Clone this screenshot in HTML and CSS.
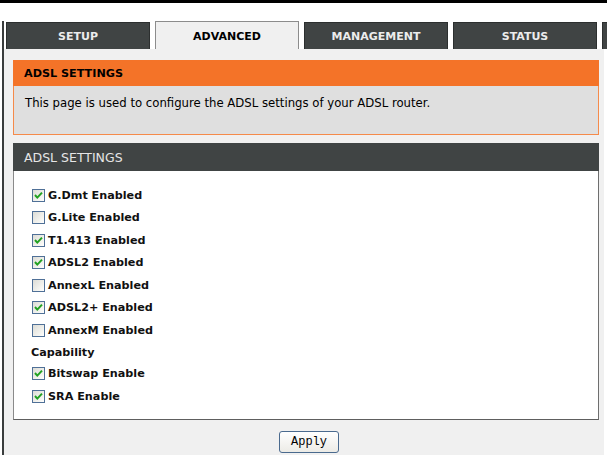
FILE: index.html
```html
<!DOCTYPE html>
<html>
<head>
<meta charset="utf-8">
<link rel="stylesheet" href="styles.css">
</head>
<body>
<div class="topbar"></div>
<div class="page">
  <div class="tabs">
    <div class="tab">SETUP</div>
    <div class="tab active">ADVANCED</div>
    <div class="tab">MANAGEMENT</div>
    <div class="tab">STATUS</div>
    <div class="tab"></div>
  </div>
  <div class="content">
    <section class="box orange">
      <div class="box-head">ADSL SETTINGS</div>
      <div class="box-body">This page is used to configure the ADSL settings of your ADSL router.</div>
    </section>
    <section class="box dark">
      <div class="box-head">ADSL SETTINGS</div>
      <div class="box-body list">
        <div class="row"><span class="cb"><svg viewBox="0 0 13 13" width="13" height="13"><path d="M3 6 L5.3 8.6 L10 3.6" /></svg></span>G.Dmt Enabled</div>
        <div class="row"><span class="cb"></span>G.Lite Enabled</div>
        <div class="row"><span class="cb"><svg viewBox="0 0 13 13" width="13" height="13"><path d="M3 6 L5.3 8.6 L10 3.6" /></svg></span>T1.413 Enabled</div>
        <div class="row"><span class="cb"><svg viewBox="0 0 13 13" width="13" height="13"><path d="M3 6 L5.3 8.6 L10 3.6" /></svg></span>ADSL2 Enabled</div>
        <div class="row"><span class="cb"></span>AnnexL Enabled</div>
        <div class="row"><span class="cb"><svg viewBox="0 0 13 13" width="13" height="13"><path d="M3 6 L5.3 8.6 L10 3.6" /></svg></span>ADSL2+ Enabled</div>
        <div class="row"><span class="cb"></span>AnnexM Enabled</div>
        <div class="row cap">Capability</div>
        <div class="row"><span class="cb"><svg viewBox="0 0 13 13" width="13" height="13"><path d="M3 6 L5.3 8.6 L10 3.6" /></svg></span>Bitswap Enable</div>
        <div class="row"><span class="cb"><svg viewBox="0 0 13 13" width="13" height="13"><path d="M3 6 L5.3 8.6 L10 3.6" /></svg></span>SRA Enable</div>
      </div>
    </section>
    <div class="actions"><button class="btn">Apply</button></div>
  </div>
</div>
</body>
</html>
```

FILE: styles.css
```css
html, body {
  margin: 0;
  padding: 0;
  overflow: hidden;
  background: #fff;
  font-family: "DejaVu Sans", Verdana, sans-serif;
  font-size: 11px;
  color: #000;
}

.topbar {
  height: 3px;
  background: #000;
}

.page {
  margin: 18px 0 0 2px;
  border-left: 2px solid #3a3d3d;
  width: 600px;
}

.tabs {
  display: flex;
  gap: 5px;
  padding-left: 2px;
  margin-right: -3px;
  height: 28px;
  overflow: hidden;
}

.tab {
  flex: 0 0 144px;
  box-sizing: border-box;
  margin-top: 1px;
  background: #404444;
  color: #ececec;
  border: 1px solid #2c2f2f;
  border-bottom: none;
  font-weight: bold;
  font-size: 11px;
  display: flex;
  align-items: center;
  justify-content: center;
  padding-top: 1px;
}

.tab.active {
  margin-top: 0;
  background: #f0f0f0;
  color: #000;
  border-color: #8c8c8c;
}

.content {
  background: #f0f0f0;
  padding: 11px 5px 0 9px;
  min-height: 406px;
  box-sizing: border-box;
}

.box-head {
  padding-left: 11px;
}

.orange .box-head {
  height: 26px;
  line-height: 27px;
  background: #f47328;
  color: #000;
  font-weight: bold;
  font-size: 11.2px;
}

.orange .box-body {
  background: #dfdfdf;
  border: 1px solid #f58a4a;
  border-top: none;
  height: 49px;
  box-sizing: border-box;
  padding: 10px 0 0 11px;
  line-height: 14px;
  font-size: 11.7px;
}

.dark {
  margin-top: 8px;
}

.dark .box-head {
  height: 28px;
  line-height: 29px;
  background: #404444;
  color: #e6e6e6;
  font-size: 12.5px;
}

.list {
  background: #fff;
  border: 1px solid #8a8a8a;
  border-top: none;
  border-bottom-color: #5e5e5e;
  border-right-color: #6e6e6e;
  padding: 13px 0 11.5px 18px;
}

.row {
  height: 22.5px;
  display: flex;
  align-items: center;
  font-weight: bold;
  font-size: 11.2px;
  color: #111;
}

.row.cap {
  height: 21px;
  margin-left: -1px;
}

.cb {
  width: 13px;
  height: 13px;
  box-sizing: border-box;
  border: 1px solid #4f7097;
  background: linear-gradient(135deg, #dcdcd6 0%, #f4f4f0 70%, #fff 100%);
  margin-right: 3px;
  position: relative;
  flex: 0 0 auto;
}

.cb svg {
  position: absolute;
  left: -1px;
  top: -1px;
}

.cb path {
  fill: none;
  stroke: #21a121;
  stroke-width: 2;
}

.actions {
  padding-top: 11px;
  text-align: center;
}

.btn {
  margin-left: 6px;
  width: 60px;
  height: 22px;
  font-family: "Liberation Mono", "Courier New", monospace;
  font-size: 12px;
  color: #000;
  background: linear-gradient(#ffffff, #ecebe6);
  border: 1px solid #4a6a8e;
  border-radius: 3px;
  padding: 0;
}
```
